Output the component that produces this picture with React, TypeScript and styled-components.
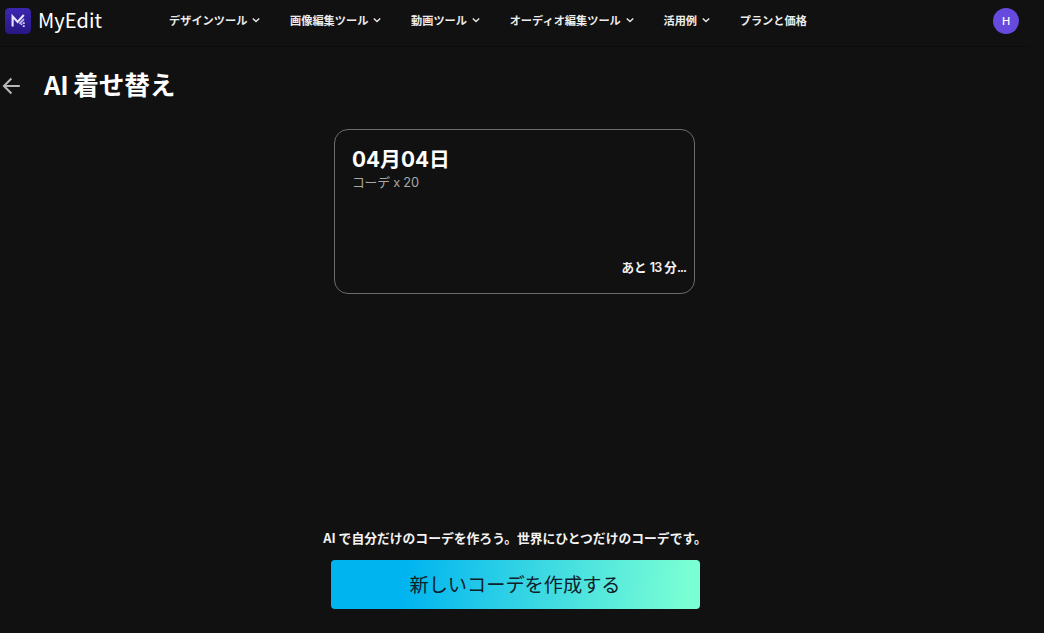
import styled, { createGlobalStyle } from "styled-components";

const GlobalStyle = createGlobalStyle`
   * {
      box-sizing: border-box;
   }

   body {
      margin: 0;
      background: #111111;
      color: #ffffff;
      font-family: "Noto Sans CJK JP", sans-serif;
      overflow: hidden;
   }

   button {
      font-family: inherit;
      border: 0;
      padding: 0;
      background: none;
      color: inherit;
      cursor: pointer;
   }
`;

const NAV_ITEMS = [
   { label: "デザインツール", hasMenu: true },
   { label: "画像編集ツール", hasMenu: true },
   { label: "動画ツール", hasMenu: true },
   { label: "オーディオ編集ツール", hasMenu: true },
   { label: "活用例", hasMenu: true },
   { label: "プランと価格", hasMenu: false },
];

const LogoMark = () => (
   <svg width="26" height="26" viewBox="0 0 26 26" fill="none">
      <defs>
         <linearGradient id="logo-bg" x1="0" y1="0" x2="0" y2="26" gradientUnits="userSpaceOnUse">
            <stop stopColor="#3b27b0" />
            <stop offset="1" stopColor="#281783" />
         </linearGradient>
      </defs>
      <rect width="26" height="26" rx="4.5" fill="url(#logo-bg)" />
      <path d="M7.6 18.6V8.4L12.6 14L18.8 7" stroke="#e9e4ff" strokeWidth="2.1" />
      <path d="M14.4 15.9L19 11.2" stroke="#c4b9f7" strokeWidth="1.7" />
      <path d="M17.8 14.2h1.9v1.7h-1.9zM15.8 15.6h1.5v1.5h-1.5zM17.8 17.2h1.9V19h-1.9z" fill="#d9d1ff" />
   </svg>
);

const Chevron = () => (
   <svg width="8" height="6" viewBox="0 0 8 6" fill="none">
      <path d="M0.8 1.4L4 4.6L7.2 1.4" stroke="#e8e8e8" strokeWidth="1.4" />
   </svg>
);

const BackArrow = () => (
   <svg width="18" height="18" viewBox="0 0 18 18" fill="none">
      <path d="M17.8 9H2M9.4 1.5L1.9 9L9.4 16.5" stroke="#b8b8b8" strokeWidth="2" />
   </svg>
);

const App = () => {
   return (
      <Page>
         <GlobalStyle />
         <Header>
            <Brand>
               <LogoMark />
               <BrandName>MyEdit</BrandName>
            </Brand>
            <Nav>
               {NAV_ITEMS.map((item) => (
                  <NavItem key={item.label}>
                     {item.label}
                     {item.hasMenu && <Chevron />}
                  </NavItem>
               ))}
            </Nav>
            <Avatar>H</Avatar>
         </Header>

         <TitleRow>
            <BackButton aria-label="戻る">
               <BackArrow />
            </BackButton>
            <Title>AI 着せ替え</Title>
         </TitleRow>

         <Card>
            <div>
               <CardDate>04月04日</CardDate>
               <CardCount>コーデ x 20</CardCount>
            </div>
            <CardStatus>
               あと <Tight>13</Tight> 分<Tight>...</Tight>
            </CardStatus>
         </Card>

         <Footer>
            <Caption>AI で自分だけのコーデを作ろう。世界にひとつだけのコーデです。</Caption>
            <CreateButton>新しいコーデを作成する</CreateButton>
         </Footer>
      </Page>
   );
};
export default App;

const Page = styled.div`
   display: flex;
   flex-direction: column;
   width: 1029px;
   height: 633px;
`;

const Header = styled.header`
   display: flex;
   align-items: center;
   flex: none;
   height: 47px;
   padding: 0 10px 5px 5px;
   border-bottom: 1px solid #0c0c0c;
`;

const Brand = styled.div`
   display: flex;
   align-items: center;
   gap: 7px;
   width: 164px;
`;

const BrandName = styled.span`
   font-size: 20px;
   line-height: 24px;
   letter-spacing: 0.1px;
   padding-bottom: 1px;
`;

const Nav = styled.nav`
   display: flex;
   align-items: center;
   flex: 1;
   gap: 29.7px;
   padding-bottom: 2px;
`;

const NavItem = styled.button`
   display: flex;
   align-items: center;
   gap: 5px;
   font-size: 11.2px;
   font-weight: 700;
   line-height: 16px;
   white-space: nowrap;
   color: #ececec;
`;

const Avatar = styled.div`
   display: flex;
   align-items: center;
   justify-content: center;
   width: 26px;
   height: 26px;
   border-radius: 50%;
   background: #654add;
   font-family: Inter, sans-serif;
   font-size: 11px;
   font-weight: 500;
`;

const TitleRow = styled.div`
   display: flex;
   align-items: center;
   flex: none;
   gap: 23px;
   height: 78px;
   padding-left: 2px;
`;

const BackButton = styled.button`
   display: flex;
`;

const Title = styled.h1`
   margin: 0;
   padding: 0 0 4px 1px;
   font-size: 25.6px;
   font-weight: 700;
   line-height: 36px;
   letter-spacing: -0.1px;
   word-spacing: -1px;
`;

const Card = styled.section`
   display: flex;
   flex-direction: column;
   justify-content: space-between;
   align-self: center;
   flex: none;
   width: 361px;
   height: 165px;
   margin-top: 4px;
   padding: 16px 8px 15px 17px;
   border: 1px solid #6c6c6c;
   border-radius: 14px;
`;

const CardDate = styled.h2`
   margin: 0;
   font-family: Inter, "Noto Sans CJK JP", sans-serif;
   font-size: 20.8px;
   font-weight: 700;
   line-height: 28px;
`;

const CardCount = styled.p`
   margin: 0;
   font-family: Inter, "Noto Sans CJK JP", sans-serif;
   font-size: 12.8px;
   line-height: 17px;
   letter-spacing: -0.2px;
   color: #a8a8a8;
`;

const CardStatus = styled.p`
   margin: 0;
   font-family: Inter, "Noto Sans CJK JP", sans-serif;
   font-size: 12.6px;
   font-weight: 600;
   line-height: 20px;
   text-align: right;
   color: #f2f2f2;
`;

const Tight = styled.span`
   letter-spacing: -1px;
`;

const Footer = styled.footer`
   display: flex;
   flex-direction: column;
   align-items: center;
   gap: 12px;
   margin-top: auto;
   padding: 0 0 24px 1px;
`;

const Caption = styled.p`
   margin: 0;
   font-size: 12.8px;
   font-weight: 700;
   line-height: 20px;
   white-space: nowrap;
   color: #f4f4f4;
`;

const CreateButton = styled.button`
   width: 369px;
   height: 49px;
   padding-bottom: 2px;
   border-radius: 4px;
   background: linear-gradient(96deg, #00b4f0 20%, #7affd4 96%);
   color: #10202a;
   font-size: 19.2px;
   line-height: 28px;
`;
